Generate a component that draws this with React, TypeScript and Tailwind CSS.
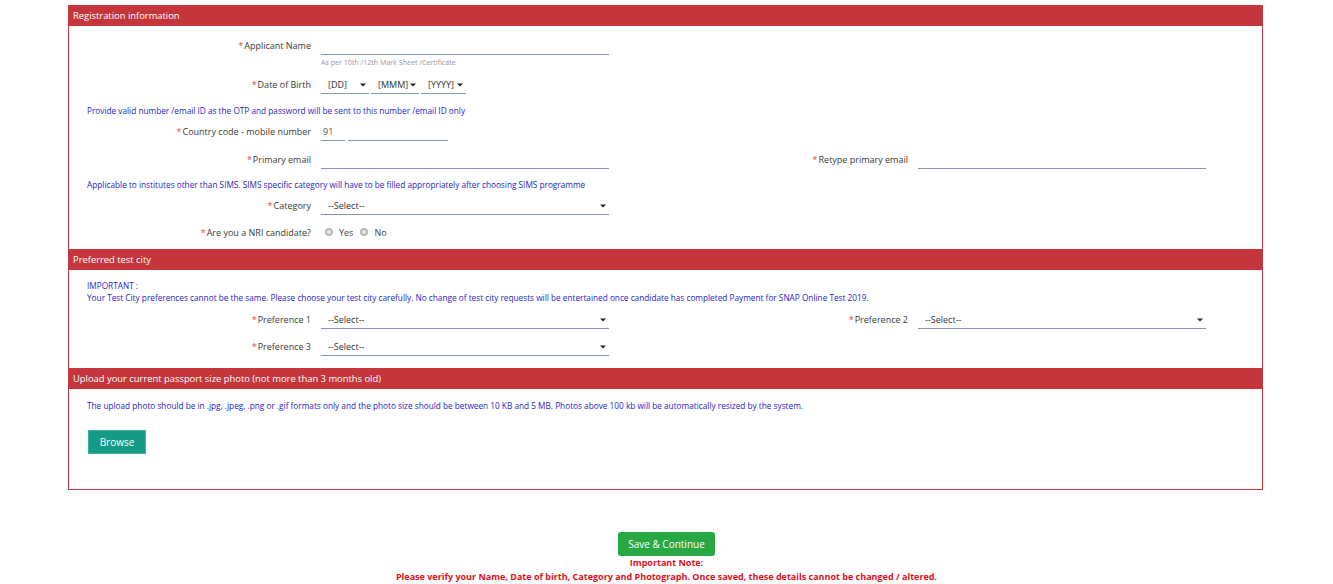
import React from "react";

const Req = () => <span className="text-[#e8434a] mr-[1px]">*</span>;

const Caret = () => (
  <svg width="6" height="4" viewBox="0 0 6 4" className="shrink-0">
    <path d="M0 0.5 L6 0.5 L3 3.5 Z" fill="#222" />
  </svg>
);

function Label({ children, w = "w-[252px]" }: { children: React.ReactNode; w?: string }) {
  return (
    <div className={`${w} shrink-0 pr-[10px] text-right text-[#3a3a3a] text-[9px] leading-none whitespace-nowrap`}>
      <Req />
      {children}
    </div>
  );
}

function TextInput({ w, value }: { w: string; value?: string }) {
  return (
    <div className={`${w} h-full border-b border-[#8393c4] flex items-center pl-[2px] pt-[2px] text-[9px] text-[#555]`}>
      {value}
    </div>
  );
}

function Select({ w, text }: { w: string; text: string }) {
  return (
    <div className={`${w} h-full border-b border-[#8393c4] flex items-center justify-between pl-[7px] pr-[3px] pt-[2px] text-[9px] text-[#333]`}>
      <span>{text}</span>
      <Caret />
    </div>
  );
}

function Header({ children }: { children: React.ReactNode }) {
  return (
    <div className="h-[21px] bg-[#c4363b] text-white text-[9.4px] flex items-center pl-[4px] leading-none">
      {children}
    </div>
  );
}

function Note({ children, className = "" }: { children: React.ReactNode; className?: string }) {
  return (
    <div className={`h-[10px] pl-[18px] text-[8.25px] leading-[10px] text-[#2525c8] whitespace-nowrap ${className}`}>
      {children}
    </div>
  );
}

function Radio() {
  return (
    <span className="inline-flex w-[8px] h-[8px] rounded-full bg-[#b8b8b8] items-center justify-center mr-[6px]">
      <span className="w-[4px] h-[4px] rounded-full bg-[#e6e6e6]" />
    </span>
  );
}

export default function App() {
  return (
    <div className="w-[1333px] h-[584px] bg-white font-['Open_Sans',sans-serif] overflow-hidden">
      <div className="pt-[5px] ml-[68px] w-[1195px]">
        <div className="border border-[#c23a40] border-t-0">
          <Header>Registration information</Header>
          <div className="pb-[7px]">
            <div className="mt-[9px] h-[20px] flex items-center">
              <Label>Applicant Name</Label>
              <TextInput w="w-[288px]" />
            </div>
            <div className="mt-[2px] h-[10px] pl-[252px] text-[7.1px] leading-[10px] text-[#999]">
              As per 10th /12th Mark Sheet /Certificate
            </div>
            <div className="mt-[7px] h-[20px] flex items-center">
              <Label>Date of Birth</Label>
              <div className="flex h-full gap-[2px]">
                <Select w="w-[48px]" text="[DD]" />
                <Select w="w-[48px]" text="[MMM]" />
                <Select w="w-[45px]" text="[YYYY]" />
              </div>
            </div>
            <Note className="mt-[12px]">
              Provide valid number /email ID as the OTP and password will be sent to this number /email ID only
            </Note>
            <div className="mt-[5px] h-[20px] flex items-center">
              <Label>Country code - mobile number</Label>
              <div className="flex h-full gap-[3px]">
                <TextInput w="w-[24px]" value="91" />
                <TextInput w="w-[100px]" />
              </div>
            </div>
            <div className="mt-[8px] h-[20px] flex items-center">
              <Label>Primary email</Label>
              <TextInput w="w-[288px]" />
              <Label w="w-[309px]">Retype primary email</Label>
              <TextInput w="w-[288px]" />
            </div>
            <Note className="mt-[11px]">
              Applicable to institutes other than SIMS. SIMS specific category will have to be filled appropriately after choosing SIMS programme
            </Note>
            <div className="mt-[5px] h-[20px] flex items-center">
              <Label>Category</Label>
              <Select w="w-[288px]" text="--Select--" />
            </div>
            <div className="mt-[7px] h-[20px] flex items-center">
              <Label>Are you a NRI candidate?</Label>
              <div className="flex items-center pl-[4px] text-[9px] text-[#444] leading-none">
                <Radio />
                <span className="mr-[7px]">Yes</span>
                <Radio />
                <span>No</span>
              </div>
            </div>
          </div>

          <Header>Preferred test city</Header>
          <div className="pb-[12px]">
            <Note className="mt-[11px]">IMPORTANT :</Note>
            <Note className="mt-[2px]">
              Your Test City preferences cannot be the same. Please choose your test city carefully. No change of test city requests will be entertained once candidate has completed Payment for SNAP Online Test 2019.
            </Note>
            <div className="mt-[6px] h-[20px] flex items-center">
              <Label>Preference 1</Label>
              <Select w="w-[288px]" text="--Select--" />
              <Label w="w-[309px]">Preference 2</Label>
              <Select w="w-[288px]" text="--Select--" />
            </div>
            <div className="mt-[7px] h-[20px] flex items-center">
              <Label>Preference 3</Label>
              <Select w="w-[288px]" text="--Select--" />
            </div>
          </div>

          <Header>Upload your current passport size photo (not more than 3 months old)</Header>
          <div className="pb-[35px]">
            <Note className="mt-[12px]">
              The upload photo should be in .jpg, .jpeg, .png or .gif formats only and the photo size should be between 10 KB and 5 MB. Photos above 100 kb will be automatically resized by the system.
            </Note>
            <div className="mt-[17px] pl-[19px]">
              <button className="w-[58px] h-[24px] bg-[#159a85] border border-[#3fb3a0] text-white text-[10px] leading-none">
                Browse
              </button>
            </div>
          </div>
        </div>
      </div>

      <div className="mt-[42px] flex flex-col items-center">
        <button className="w-[97px] h-[24px] rounded-[3px] bg-[#28a745] text-white text-[10px] leading-none">
          Save &amp; Continue
        </button>
        <div className="mt-[1px] h-[12px] text-[9px] leading-[12px] font-bold text-[#e0101a]">Important Note:</div>
        <div className="mt-[2px] h-[12px] text-[9px] leading-[12px] font-bold text-[#e0101a] whitespace-nowrap">
          Please verify your Name, Date of birth, Category and Photograph. Once saved, these details cannot be changed / altered.
        </div>
      </div>
    </div>
  );
}
